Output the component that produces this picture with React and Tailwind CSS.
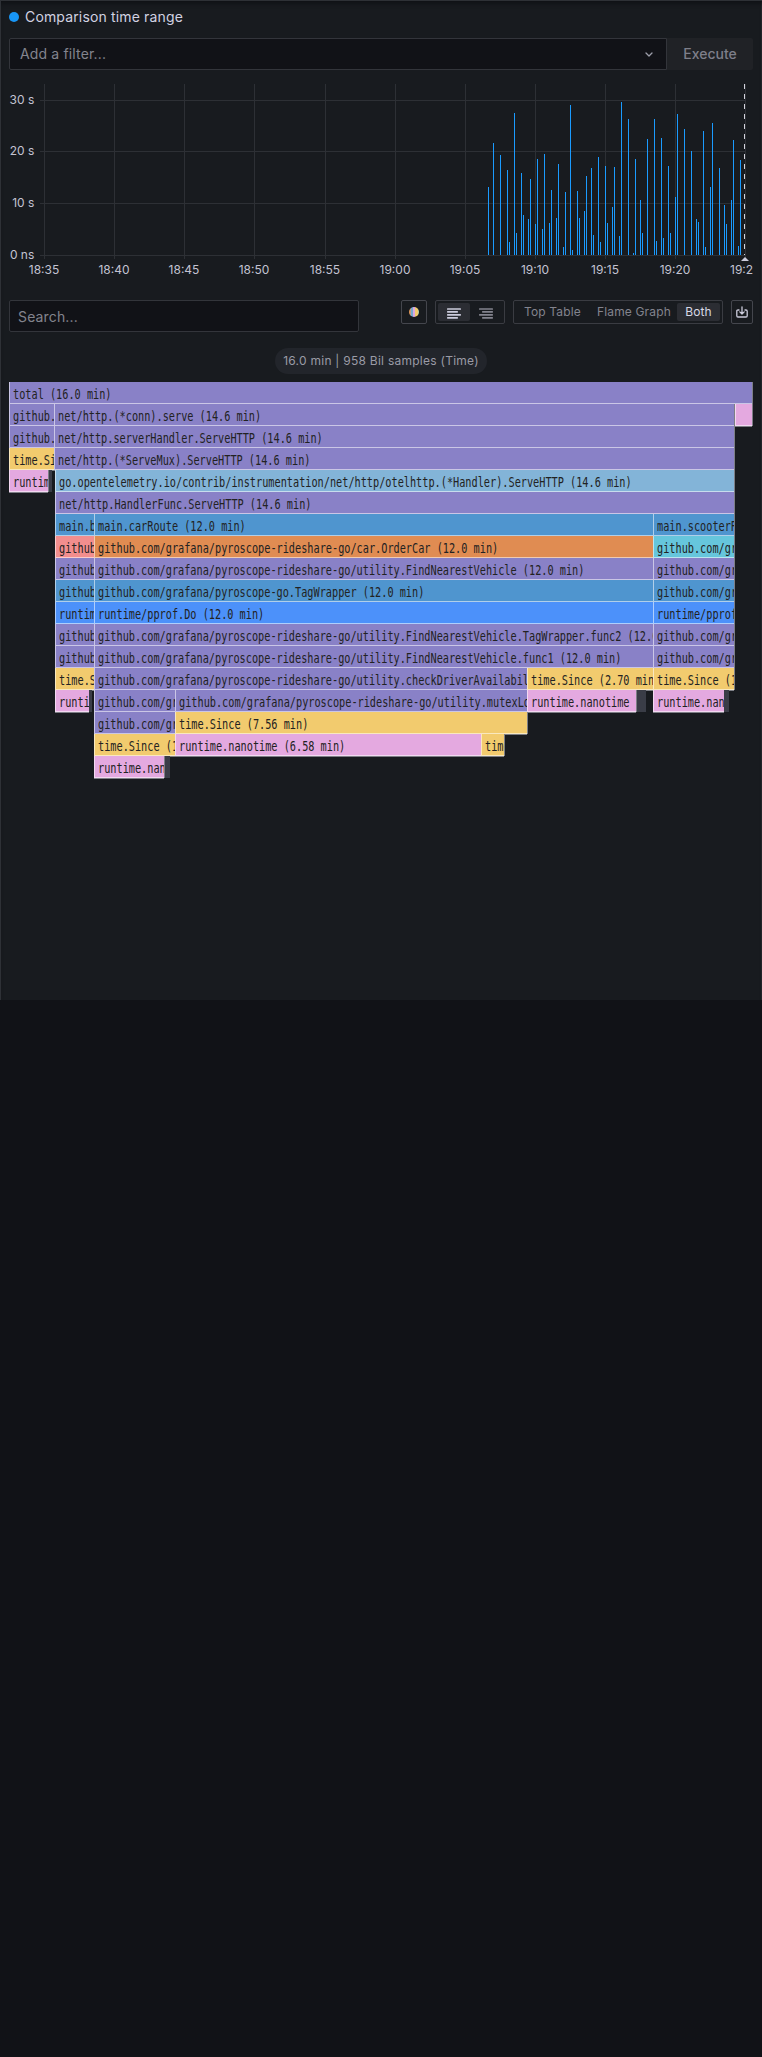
import React from "react";

const BARS = [
  [488, 187], [493, 143], [500, 155], [507, 170], [509, 242], [514, 113], [516, 233], [521, 173], [523, 215],
  [528, 219], [530, 179], [535, 224], [537, 159], [542, 229], [544, 154], [549, 223], [551, 190], [556, 218],
  [558, 164], [563, 247], [565, 192], [570, 105], [572, 250], [577, 191], [579, 218], [584, 211], [586, 176],
  [591, 168], [593, 235], [598, 157], [600, 242], [605, 166], [607, 223], [612, 207], [614, 167], [619, 236],
  [621, 102], [628, 119], [633, 253], [635, 159], [640, 200], [642, 233], [647, 139], [654, 119], [656, 241],
  [661, 138], [663, 238], [668, 166], [670, 233], [675, 197], [677, 114], [684, 129], [691, 151], [696, 219],
  [698, 222], [703, 131], [705, 247], [710, 187], [712, 123], [719, 168], [724, 205], [726, 224], [731, 200],
  [733, 140], [738, 246], [740, 160],
];
const X_TICKS = [
  [44, "18:35"], [114, "18:40"], [184, "18:45"], [254, "18:50"], [325, "18:55"], [395, "19:00"],
  [465, "19:05"], [535, "19:10"], [605, "19:15"], [675, "19:20"], [745, "19:25"],
];
const Y_TICKS = [[100, "30 s"], [151, "20 s"], [203, "10 s"], [255, "0 ns"]];

const P = "#8981c7";
const B = "#4f95cf";
const R = "#4c91fa";
const Y = "#f2cb6e";
const K = "#e4a9e0";
const MUTED = "#3a3d47";
const U = "github.com/grafana/pyroscope-rideshare-go/";

// Each level lists [left, right, colour, label].
const LEVELS = [
  [[9, 752, P, "total (16.0 min)"]],
  [[9, 54, P, "github.com/pyroscope"], [54, 734, P, "net/http.(*conn).serve (14.6 min)"], [735, 752, K, ""]],
  [[9, 54, P, "github.com/pyroscope"], [54, 734, P, "net/http.serverHandler.ServeHTTP (14.6 min)"]],
  [[9, 54, Y, "time.Since"], [54, 734, P, "net/http.(*ServeMux).ServeHTTP (14.6 min)"]],
  [[9, 48, K, "runtime.nanotime"], [49, 52, MUTED, ""], [55, 734, "#83b4d8", "go.opentelemetry.io/contrib/instrumentation/net/http/otelhttp.(*Handler).ServeHTTP (14.6 min)"]],
  [[55, 734, P, "net/http.HandlerFunc.ServeHTTP (14.6 min)"]],
  [[55, 94, B, "main.bikeRoute"], [94, 653, B, "main.carRoute (12.0 min)"], [653, 734, B, "main.scooterRoute"]],
  [[55, 94, "#f28e8e", "github.com"], [94, 653, "#e08c52", U + "car.OrderCar (12.0 min)"], [653, 734, "#66c6dc", U]],
  [[55, 94, P, "github.com"], [94, 653, P, U + "utility.FindNearestVehicle (12.0 min)"], [653, 734, P, U]],
  [[55, 94, B, "github.com"], [94, 653, B, "github.com/grafana/pyroscope-go.TagWrapper (12.0 min)"], [653, 734, B, U]],
  [[55, 94, R, "runtime/pprof.Do"], [94, 653, R, "runtime/pprof.Do (12.0 min)"], [653, 734, R, "runtime/pprof.Do"]],
  [[55, 94, P, "github.com"], [94, 653, P, U + "utility.FindNearestVehicle.TagWrapper.func2 (12.0 min)"], [653, 734, P, U]],
  [[55, 94, P, "github.com"], [94, 653, P, U + "utility.FindNearestVehicle.func1 (12.0 min)"], [653, 734, P, U]],
  [[55, 94, Y, "time.Since"], [94, 527, P, U + "utility.checkDriverAvailability (9.32 min)"], [527, 653, Y, "time.Since (2.70 min)"], [653, 734, Y, "time.Since (1.80 min)"]],
  [[55, 89, K, "runtime.nanotime"], [89, 92, MUTED, ""], [94, 175, P, U], [175, 527, P, U + "utility.mutexLock (7.56 min)"], [527, 636, K, "runtime.nanotime"], [637, 646, MUTED, ""], [653, 724, K, "runtime.nanotime"], [724, 729, MUTED, ""]],
  [[94, 175, P, U], [175, 527, Y, "time.Since (7.56 min)"]],
  [[94, 175, Y, "time.Since (1.70 min)"], [175, 481, K, "runtime.nanotime (6.58 min)"], [481, 504, Y, "time.Since"]],
  [[94, 164, K, "runtime.nanotime"], [165, 170, MUTED, ""]],
];

function FlameBar({ width, gap, color, label }) {
  const muted = color === MUTED;
  return (
    <div
      className={
        "h-[22px] shrink-0 overflow-hidden " +
        (muted ? "" : "border-b border-l border-white/55 shadow-[0_1px_0_#7d7f86,1px_0_0_#7d7f86]")
      }
      style={{ width, marginLeft: gap, backgroundColor: color }}
    >
      <span className="ml-[3px] block origin-left scale-x-[0.7305] whitespace-pre pt-[2px] font-['DejaVu_Sans_Mono',monospace] text-[14px] leading-[20px] text-[#222]">
        {label}
      </span>
    </div>
  );
}

function FlameGraph() {
  return (
    <div className="mt-2 flex flex-col">
      {LEVELS.map((row, r) => (
        <div key={r} className="flex h-[22px]">
          {row.map(([l, right, color, label], i) => (
            <FlameBar
              key={i}
              width={right - l}
              gap={l - (i ? row[i - 1][1] : 9)}
              color={color}
              label={label}
            />
          ))}
        </div>
      ))}
    </div>
  );
}

function Timeline() {
  return (
    <svg className="-ml-2 block h-[202px] w-[753px]" viewBox="1 80 753 202" fontFamily="Inter, sans-serif" fontSize="12">
      <g fill="#2d3035" shapeRendering="crispEdges">
        {X_TICKS.map(([x]) => <rect key={x} x={x} y="84" width="1" height="175" />)}
        {Y_TICKS.map(([y]) => <rect key={y} x="40" y={y} width="706" height="1" />)}
      </g>
      <g fill="#1a9bff" shapeRendering="crispEdges">
        {BARS.map(([x, y]) => <rect key={x} x={x} y={y} width="1" height={255 - y} />)}
      </g>
      <path d="M744.5 84V255" stroke="#d3d3dc" strokeDasharray="5 5" shapeRendering="crispEdges" />
      <path d="M741 261L745 257L749 261Z" fill="#ccccdc" />
      <g fill="#c3c3d2">
        {Y_TICKS.map(([y, t]) => <text key={t} x="34.3" y={y + 4} textAnchor="end">{t}</text>)}
        {X_TICKS.slice(0, -1).map(([x, t]) => <text key={t} x={x} y="274" textAnchor="middle">{t}</text>)}
        <text x="730" y="274">19:2</text>
      </g>
    </svg>
  );
}

function AlignIcon({ right, color }) {
  const short = right ? 3 : 0;
  return (
    <svg className="mt-[2px] h-[11px] w-[14px]" viewBox="0 0 14 11" fill={color}>
      <rect x="0" y="0.2" width="14" height="1.6" rx=".6" />
      <rect x={short} y="3.1" width="11" height="1.6" rx=".6" />
      <rect x="0" y="6.1" width="14" height="1.6" rx=".6" />
      <rect x={short} y="9.1" width="11" height="1.6" rx=".6" />
    </svg>
  );
}

export default function App() {
  return (
    <div className="h-[2057px] w-[762px] overflow-hidden bg-[#111217] font-[Inter,sans-serif] text-[#ccccdc]">
      <div className="h-[1000px] border-t border-l border-[#2e3136] bg-[#181b1f] pr-[9px] pl-2 shadow-[inset_0_5px_5px_-3px_#0e1014,inset_-1px_0_0_#24272c]">
        <div className="flex h-[37px] items-center gap-[6px] pb-[5px] text-sm tracking-[0.15px] text-[#d2d2e2]">
          <span className="size-[10px] rounded-full bg-[#1896f6]" />
          Comparison time range
        </div>
        <div className="flex h-8">
          <div className="flex w-[658px] items-center justify-between rounded-l-xs border border-[#33353b] bg-[#111217] pr-[11px] pl-[10px] text-sm tracking-[0.15px] text-[#83848e]">
            Add a filter...
            <svg className="size-3" viewBox="0 0 12 12" fill="none" stroke="#9d9eaa" strokeWidth="1.3" strokeLinecap="round" strokeLinejoin="round">
              <path d="M3 5L6 8L9 5" />
            </svg>
          </div>
          <div className="flex w-[86px] items-center justify-center rounded-r-xs bg-[#202226] text-sm font-medium text-[#7e7f8a]">
            Execute
          </div>
        </div>
        <div className="pt-[10px]"><Timeline /></div>
        <div className="mt-[18px] flex h-8 items-start">
          <div className="flex h-8 w-[350px] items-center rounded-xs border border-[#33353b] bg-[#111217] px-2 pt-[2px] text-sm tracking-[0.15px] text-[#83848e]">
            Search...
          </div>
          <div className="ml-[42px] flex h-6 w-[26px] items-center justify-center rounded-xs border border-[#44464d]">
            <span className="size-[10px] rounded-full bg-[linear-gradient(90deg,#e59a5a_0_10%,#74a9d0_25%_35%,#dba7e0_45%_55%,#f2cb6e_65%_85%,#9fd6c0)]" />
          </div>
          <div className="ml-2 flex h-6 w-[70px] items-center rounded-xs border border-[#3a3c42] px-[2px]">
            <div className="flex h-[18px] w-8 items-center justify-center rounded-xs bg-[#2b2d33]"><AlignIcon color="#ccccdc" /></div>
            <div className="flex h-[18px] w-8 items-center justify-center"><AlignIcon right color="#83848e" /></div>
          </div>
          <div className="ml-2 flex h-6 w-[210px] items-center rounded-xs border border-[#3a3c42] px-[2px] text-xs tracking-[0.15px] text-[#83848e]">
            <span className="w-[73px] pl-2 whitespace-nowrap">Top Table</span>
            <span className="w-[88px] pl-2 whitespace-nowrap">Flame Graph</span>
            <span className="flex h-[18px] w-[43px] items-center justify-center rounded-xs bg-[#2b2d33] text-[#d8d8e6]">Both</span>
          </div>
          <div className="ml-2 flex h-6 w-[22px] items-center justify-center rounded-xs border border-[#44464d]">
            <svg className="size-3" viewBox="0 0 12 12" fill="none" stroke="#ccccdc" strokeWidth="1.3" strokeLinecap="round" strokeLinejoin="round">
              <path d="M6 .8V8M3.8 5.9L6 8L8.2 5.9M3 4H2Q.8 4 .8 5.2V9.8Q.8 11 2 11H10Q11.2 11 11.2 9.8V5.2Q11.2 4 10 4H9" />
            </svg>
          </div>
        </div>
        <div className="mt-4 flex h-[26px] justify-center">
          <div className="flex w-[212px] items-center justify-center rounded-full bg-[#22252b] text-xs whitespace-nowrap tracking-[0.26px] text-[#9a9ba6]">
            16.0 min | 958 Bil samples (Time)
          </div>
        </div>
        <FlameGraph />
      </div>
    </div>
  );
}
